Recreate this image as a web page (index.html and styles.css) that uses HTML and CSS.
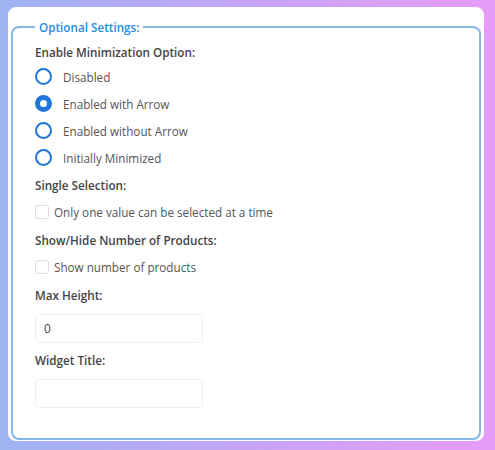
FILE: index.html
```html
<!DOCTYPE html>
<html lang="en">
<head>
    <meta charset="UTF-8">
    <meta name="viewport" content="width=device-width, initial-scale=1.0">
    <title>Optional Settings</title>
    <link rel="stylesheet" href="styles.css">
</head>
<body>
    <div class="card">
        <fieldset class="settings">
            <legend>Optional Settings:</legend>

            <div class="group group-radio">
                <div class="group-title">Enable Minimization Option:</div>
                <label class="option"><input type="radio" name="minimize" value="disabled"> <span>Disabled</span></label>
                <label class="option"><input type="radio" name="minimize" value="arrow" checked> <span>Enabled with Arrow</span></label>
                <label class="option"><input type="radio" name="minimize" value="noarrow"> <span>Enabled without Arrow</span></label>
                <label class="option"><input type="radio" name="minimize" value="minimized"> <span>Initially Minimized</span></label>
            </div>

            <div class="group">
                <div class="group-title">Single Selection:</div>
                <label class="check"><input type="checkbox" name="single"> <span>Only one value can be selected at a time</span></label>
            </div>

            <div class="group">
                <div class="group-title">Show/Hide Number of Products:</div>
                <label class="check"><input type="checkbox" name="count"> <span>Show number of products</span></label>
            </div>

            <div class="group group-field">
                <div class="group-title">Max Height:</div>
                <input class="field" type="text" name="maxHeight" value="0">
            </div>

            <div class="group group-field">
                <div class="group-title">Widget Title:</div>
                <input class="field" type="text" name="title">
            </div>
        </fieldset>
    </div>
</body>
</html>
```

FILE: styles.css
```css
body {
    font-family: "Open Sans", Arial, sans-serif;
    font-size: 11.7px;
    color: #555;
    margin: 0;
    height: 450px;
    background: linear-gradient(to right, #9db3f2, #c6a5f6 50%, #e79bf8);
    padding: 7px 11px 9px 8px;
    box-sizing: border-box;
}
.card {
    background-color: white;
    border-radius: 8px;
    height: 434px;
    padding: 12px 3px 1px 3px;
    box-sizing: border-box;
}
.settings {
    border: 2px solid #85b7e6;
    border-radius: 8px;
    margin: 0;
    padding: 8px 20px 0 22px;
    height: 421px;
    box-sizing: border-box;
}
.settings legend {
    color: #2b8ae0;
    font-size: 11.7px;
    font-weight: 600;
    padding: 0 4px;
    line-height: 16px;
}
.group {
    margin-bottom: 4px;
}
.group-radio {
    margin-bottom: 5px;
}
.group-field {
    margin-bottom: 8px;
}
.group-title {
    font-weight: 600;
    color: #444;
    line-height: 18px;
    margin-bottom: 2px;
}
.option {
    display: flex;
    align-items: center;
    height: 27px;
}
.check {
    display: flex;
    align-items: center;
    height: 31px;
}
.option input {
    appearance: none;
    width: 17px;
    height: 17px;
    margin: 0 11px 0 0;
    border: 2px solid #1d76d8;
    border-radius: 50%;
    background-color: white;
    box-sizing: border-box;
}
.option input:checked {
    border-width: 5px;
}
.check input {
    appearance: none;
    width: 14px;
    height: 14px;
    margin: 0 5px 0 0;
    border: 1px solid #ddd;
    border-radius: 3px;
    background-color: white;
    box-sizing: border-box;
}
.field {
    display: block;
    width: 168px;
    height: 29px;
    margin-top: 10px;
    padding: 0 8px;
    border: 1px solid #eee;
    border-radius: 4px;
    font-family: inherit;
    font-size: 12px;
    color: #444;
    box-sizing: border-box;
}
```
